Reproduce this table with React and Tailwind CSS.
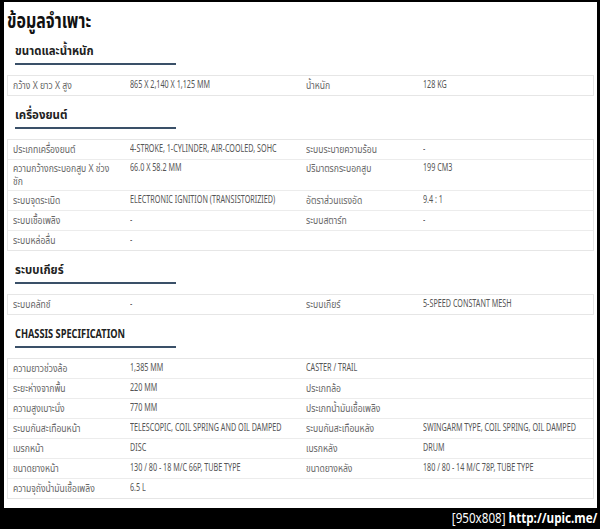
const font = { fontFamily: '"Liberation Sans Narrow", "Noto Sans Thai", "Noto Sans", sans-serif' };

function Heading({ children, scale, first }) {
  return (
    <div className={"pl-[8px] " + (first ? "pt-[8px]" : "pt-[11px]")}>
      <div className="text-[13px] leading-[16px] font-bold text-[#222] whitespace-nowrap">
        <span className={"inline-block origin-left " + scale}>{children}</span>
      </div>
      <div className="mt-[4px] w-[161px] h-[2px] bg-[#3a5068]" />
    </div>
  );
}

function Cell({ c, j, tight }) {
  const latin = typeof c === "string" && /^[A-Z0-9 ,.:/()\-]+$/.test(c);
  const cls = latin
    ? "text-[10px] text-[#555]"
    : j % 2 === 0
    ? "text-[11px] text-[#666]"
    : "text-[10px] text-[#555]";
  const sc = latin ? "scale-x-[0.72]" : "scale-x-[0.78]";
  return (
    <div className={"px-[5px] whitespace-nowrap " + (tight ? "py-[2px] " : "py-[3px] ") + cls}>
      <span className={"inline-block origin-left " + sc}>{c}</span>
    </div>
  );
}

function Table({ rows }) {
  return (
    <div className="mt-[10px] border border-[#e6e6e6] leading-[13px]">
      {rows.map((r, i) => {
        const tight = typeof r[0] !== "string";
        return (
          <div key={i} className={"grid grid-cols-[117px_176px_117px_1fr] " + (i > 0 ? "border-t border-[#ececec]" : "")}>
            {r.map((c, j) => (
              <Cell key={j} c={c} j={j} tight={tight} />
            ))}
          </div>
        );
      })}
    </div>
  );
}

export default function App() {
  return (
    <div className="w-[600px] h-[529px] bg-black flex flex-col overflow-hidden" style={font}>
      <div className="ml-[4px] mt-[2px] w-[593px] h-[506px] shrink-0 bg-white px-[3px] flex flex-col">
        <div className="pt-[7px] pl-0 text-[21px] leading-[26px] font-bold text-[#111] whitespace-nowrap">
          <span className="inline-block origin-left scale-x-[0.76]">ข้อมูลจำเพาะ</span>
        </div>
        <Heading first scale="scale-x-[0.88]">ขนาดและน้ำหนัก</Heading>
        <Table rows={[["กว้าง X ยาว X สูง", "865 X 2,140 X 1,125 MM", "น้ำหนัก", "128 KG"]]} />
        <Heading scale="scale-x-[0.88]">เครื่องยนต์</Heading>
        <Table
          rows={[
            ["ประเภทเครื่องยนต์", "4-STROKE, 1-CYLINDER, AIR-COOLED, SOHC", "ระบบระบายความร้อน", "-"],
            [<>ความกว้างกระบอกสูบ X ช่วง<br />ชัก</>, "66.0 X 58.2 MM", "ปริมาตรกระบอกสูบ", "199 CM3"],
            ["ระบบจุดระเบิด", "ELECTRONIC IGNITION (TRANSISTORIZIED)", "อัตราส่วนแรงอัด", "9.4 : 1"],
            ["ระบบเชื้อเพลิง", "-", "ระบบสตาร์ท", "-"],
            ["ระบบหล่อลื่น", "-", "", ""],
          ]}
        />
        <Heading scale="scale-x-[0.88]">ระบบเกียร์</Heading>
        <Table rows={[["ระบบคลัทช์", "-", "ระบบเกียร์", "5-SPEED CONSTANT MESH"]]} />
        <Heading scale="scale-x-[0.71]">CHASSIS SPECIFICATION</Heading>
        <Table
          rows={[
            ["ความยาวช่วงล้อ", "1,385 MM", "CASTER / TRAIL", ""],
            ["ระยะห่างจากพื้น", "220 MM", "ประเภทล้อ", ""],
            ["ความสูงเบาะนั่ง", "770 MM", "ประเภทน้ำมันเชื้อเพลิง", ""],
            ["ระบบกันสะเทือนหน้า", "TELESCOPIC, COIL SPRING AND OIL DAMPED", "ระบบกันสะเทือนหลัง", "SWINGARM TYPE, COIL SPRING, OIL DAMPED"],
            ["เบรกหน้า", "DISC", "เบรกหลัง", "DRUM"],
            ["ขนาดยางหน้า", "130 / 80 - 18 M/C 66P, TUBE TYPE", "ขนาดยางหลัง", "180 / 80 - 14 M/C 78P, TUBE TYPE"],
            ["ความจุถังน้ำมันเชื้อเพลิง", "6.5 L", "", ""],
          ]}
        />
      </div>
      <div className="flex-1 flex justify-end items-center pr-[3px] text-white text-[14px] leading-[18px] whitespace-nowrap">
        <span className="inline-block origin-right scale-x-[0.83]">
          [950x808] <span className="font-bold">http://upic.me/</span>
        </span>
      </div>
    </div>
  );
}
